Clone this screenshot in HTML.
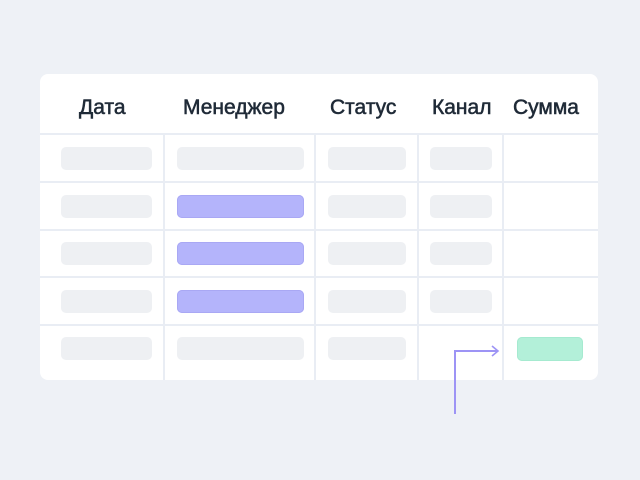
<!DOCTYPE html>
<html><head><meta charset="utf-8"><style>
html,body{margin:0;padding:0}
body{width:640px;height:480px;background:#eef1f6;position:relative;overflow:hidden;font-family:"Liberation Sans",sans-serif}
.card{position:absolute;left:40px;top:74px;width:558px;height:306px;background:#fff;border-radius:8px;overflow:hidden}
.h{position:absolute;top:96px;font-size:21px;color:#1f2a37;line-height:24px;white-space:nowrap;-webkit-text-stroke:0.55px #1f2a37}
.hl{position:absolute;left:40px;width:558px;height:2px;background:#e9edf4}
.vl{position:absolute;top:134px;height:246px;width:2px;background:#e9edf4}
.p{position:absolute;height:23px;border-radius:5px;background:#eef0f3}
.pu{background:#b4b4fb;box-shadow:inset 0 0 0 1px #a9a8f4}
.gr{background:#b3f0d9;box-shadow:inset 0 0 0 1px #a6ead0}
</style></head><body>
<div class="card"></div>
<div class="h" style="left:79px">Дата</div>
<div class="h" style="left:183px">Менеджер</div>
<div class="h" style="left:330px">Статус</div>
<div class="h" style="left:432px">Канал</div>
<div class="h" style="left:513px">Сумма</div>
<div class="hl" style="top:133px"></div>
<div class="hl" style="top:181px"></div>
<div class="hl" style="top:229px"></div>
<div class="hl" style="top:276px"></div>
<div class="hl" style="top:324px"></div>
<div class="vl" style="left:163px"></div>
<div class="vl" style="left:314px"></div>
<div class="vl" style="left:417px"></div>
<div class="vl" style="left:502px"></div>

<div class="p" style="left:61px;top:147px;width:91px"></div>
<div class="p" style="left:177px;top:147px;width:127px"></div>
<div class="p" style="left:328px;top:147px;width:78px"></div>
<div class="p" style="left:430px;top:147px;width:62px"></div>

<div class="p" style="left:61px;top:195px;width:91px"></div>
<div class="p pu" style="left:177px;top:195px;width:127px"></div>
<div class="p" style="left:328px;top:195px;width:78px"></div>
<div class="p" style="left:430px;top:195px;width:62px"></div>

<div class="p" style="left:61px;top:242px;width:91px"></div>
<div class="p pu" style="left:177px;top:242px;width:127px"></div>
<div class="p" style="left:328px;top:242px;width:78px"></div>
<div class="p" style="left:430px;top:242px;width:62px"></div>

<div class="p" style="left:61px;top:290px;width:91px"></div>
<div class="p pu" style="left:177px;top:290px;width:127px"></div>
<div class="p" style="left:328px;top:290px;width:78px"></div>
<div class="p" style="left:430px;top:290px;width:62px"></div>

<div class="p" style="left:61px;top:337px;width:91px"></div>
<div class="p" style="left:177px;top:337px;width:127px"></div>
<div class="p" style="left:328px;top:337px;width:78px"></div>
<div class="p gr" style="left:517px;top:337px;width:66px;height:24px"></div>

<svg style="position:absolute;left:0;top:0" width="640" height="480">
<path d="M455 414 V351 H498" fill="none" stroke="#9d94f5" stroke-width="2"/>
<path d="M492 346 L498 351 L492 356" fill="none" stroke="#9d94f5" stroke-width="1.6"/>
</svg>
</body></html>
